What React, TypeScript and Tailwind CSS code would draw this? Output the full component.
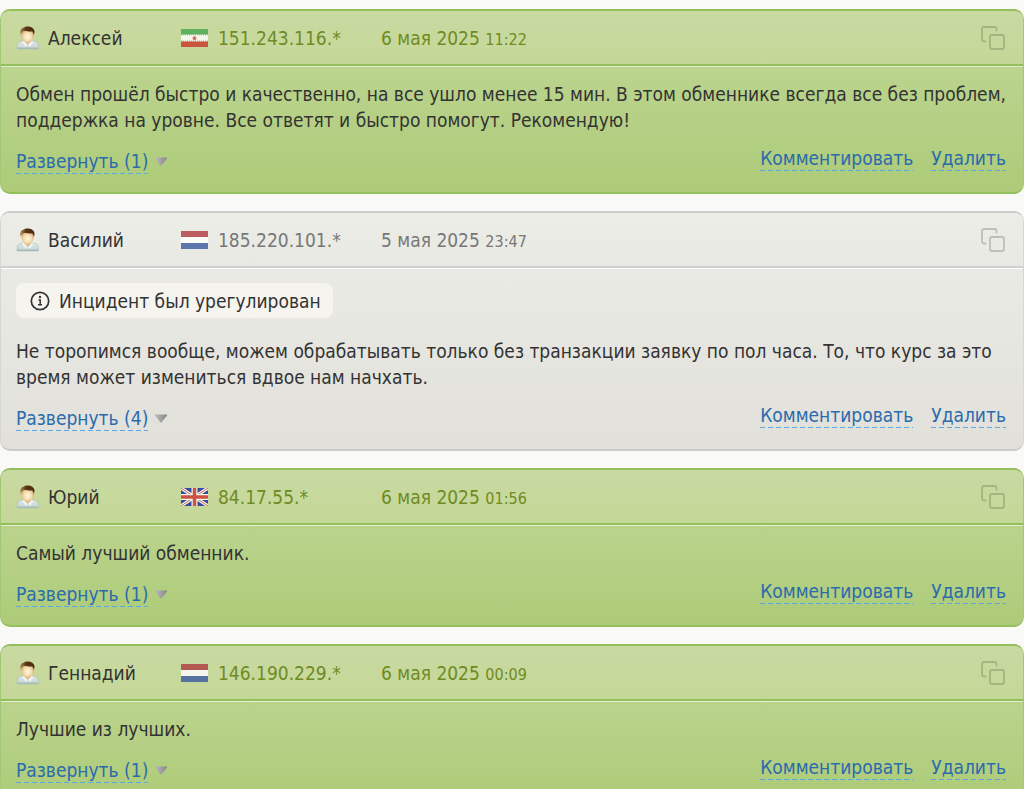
import { useId } from "react";
import { clsx } from "clsx";

type Country = "ir" | "nl" | "gb";

interface Review {
  id: number;
  name: string;
  country: Country;
  ip: string;
  date: string;
  time: string;
  text: string;
  replies: number;
  status?: string;
}

const reviews: Review[] = [
  {
    id: 1,
    name: "Алексей",
    country: "ir",
    ip: "151.243.116.*",
    date: "6 мая 2025",
    time: "11:22",
    text: "Обмен прошёл быстро и качественно, на все ушло менее 15 мин. В этом обменнике всегда все без проблем, поддержка на уровне. Все ответят и быстро помогут. Рекомендую!",
    replies: 1,
  },
  {
    id: 2,
    name: "Василий",
    country: "nl",
    ip: "185.220.101.*",
    date: "5 мая 2025",
    time: "23:47",
    text: "Не торопимся вообще, можем обрабатывать только без транзакции заявку по пол часа. То, что курс за это время может измениться вдвое нам начхать.",
    replies: 4,
    status: "Инцидент был урегулирован",
  },
  {
    id: 3,
    name: "Юрий",
    country: "gb",
    ip: "84.17.55.*",
    date: "6 мая 2025",
    time: "01:56",
    text: "Самый лучший обменник.",
    replies: 1,
  },
  {
    id: 4,
    name: "Геннадий",
    country: "nl",
    ip: "146.190.229.*",
    date: "6 мая 2025",
    time: "00:09",
    text: "Лучшие из лучших.",
    replies: 1,
  },
];

function Avatar() {
  const id = useId();
  return (
    <svg width="24" height="24" viewBox="0 0 24 24" className="shrink-0" aria-hidden="true">
      <defs>
        <radialGradient id={`${id}-face`} cx="0.5" cy="0.6" r="0.6">
          <stop offset="0" stopColor="#fff8e2" />
          <stop offset="0.6" stopColor="#f3d8a8" />
          <stop offset="1" stopColor="#c08a52" />
        </radialGradient>
        <linearGradient id={`${id}-hair`} x1="0" y1="0" x2="1" y2="0">
          <stop offset="0" stopColor="#b08a58" />
          <stop offset="0.4" stopColor="#5a3416" />
          <stop offset="1" stopColor="#4a2a10" />
        </linearGradient>
        <linearGradient id={`${id}-shirt`} x1="0" y1="0" x2="0" y2="1">
          <stop offset="0" stopColor="#dfe6e2" />
          <stop offset="0.7" stopColor="#ccd9d8" />
          <stop offset="1" stopColor="#98b2ac" />
        </linearGradient>
      </defs>
      <path
        d="M1 23v-3c0-3 2-4.500 5.500-5h10.500c3.500.5 5.500 2 5.500 5v3z"
        fill={`url(#${id}-shirt)`}
        stroke="#a9c0ba"
        strokeWidth="0.6"
      />
      <path d="M8 14.500l3.800 5 3.700-5z" fill="#dfb97f" />
      <path d="M7.500 14.800l4.300 4.200-2.300 2-3.500-5zM16 14.800l-4.200 4.200 2.200 2 3.500-5z" fill="#edf1f4" />
      <ellipse cx="11.600" cy="9.200" rx="6" ry="6.800" fill={`url(#${id}-face)`} />
      <path
        d="M4.800 9C3.500 5 4.500 2 8.500 1.200c1.500-1 7-.8 8.500 1.300 2 1.500 1.800 4.500.8 6.500-.3-1.800-.8-3-1.800-3.800-2.500.4-6 .3-8-.4C6.300 5.700 5.200 7 4.800 9z"
        fill={`url(#${id}-hair)`}
      />
    </svg>
  );
}

function Flag({ country }: { country: Country }) {
  return (
    <svg width="27" height="18" viewBox="0 0 27 18" className="shrink-0 opacity-80" aria-hidden="true">
      {country === "ir" && (
        <>
          <path d="M0 0h27v18H0z" fill="#fff" />
          <path d="M0 0h27v5.500H0z" fill="#46a850" />
          <path d="M0 12.500h27V18H0z" fill="#cc3527" />
          <path d="M0 5.800h27" stroke="#46a850" strokeWidth="0.8" strokeDasharray="1 1" />
          <path d="M0 12.200h27" stroke="#cc3527" strokeWidth="0.8" strokeDasharray="1 1" />
          <path d="M13.500 7l1.800 1.200v2l-1.800 1.200-1.800-1.200v-2z" fill="#d8554b" />
        </>
      )}
      {country === "nl" && (
        <>
          <path d="M0 0h27v18H0z" fill="#fff" />
          <path d="M0 0h27v6H0z" fill="#b03a40" />
          <path d="M0 12h27v6H0z" fill="#3a58a0" />
        </>
      )}
      {country === "gb" && (
        <>
          <path d="M0 0h27v18H0z" fill="#15299a" />
          <path d="M0 0l27 18M27 0L0 18" stroke="#fff" strokeWidth="3.200" />
          <path d="M0 0l27 18M27 0L0 18" stroke="#cf4340" strokeWidth="1" />
          <path d="M13.500 0v18M0 9h27" stroke="#fff" strokeWidth="6" />
          <path d="M13.500 0v18M0 9h27" stroke="#cf3030" strokeWidth="3.500" />
        </>
      )}
    </svg>
  );
}

function CopyIcon() {
  return (
    <svg
      width="26"
      height="26"
      viewBox="0 0 26 26"
      fill="none"
      stroke="currentColor"
      strokeWidth="1.800"
      strokeLinecap="round"
      strokeLinejoin="round"
      aria-hidden="true"
    >
      <rect x="10" y="10" width="14" height="14" rx="2" />
      <path d="M5.500 16.500H4A2 2 0 0 1 2 14.500V4A2 2 0 0 1 4 2H14.500A2 2 0 0 1 16.500 4V5.500" />
    </svg>
  );
}

function InfoIcon() {
  return (
    <svg width="20" height="20" viewBox="0 0 20 20" className="shrink-0" fill="none" stroke="currentColor" aria-hidden="true">
      <circle cx="10" cy="10" r="8.700" strokeWidth="1.700" />
      <path d="M8.500 9h1.700v4.500M8 13.800h4" strokeWidth="1.500" />
      <circle cx="10" cy="6" r="1.200" fill="currentColor" stroke="none" />
    </svg>
  );
}

function Arrow() {
  const id = useId();
  return (
    <svg width="12" height="9" viewBox="0 0 12 9" aria-hidden="true">
      <defs>
        <linearGradient id={id} x1="0" y1="0" x2="1" y2="0">
          <stop offset="0" stopColor="#bcbcbc" />
          <stop offset="1" stopColor="#868686" />
        </linearGradient>
      </defs>
      <path d="M0 .5h12v1L6.500 8.500h-1L0 1.500z" fill={`url(#${id})`} />
    </svg>
  );
}

// Dashed underline drawn as a repeating 5px dash / 3px gap
const linkStyle =
  "cursor-pointer pb-px leading-6 text-[#2a6bac] bg-[linear-gradient(90deg,#5aa9e6_5px,transparent_5px)] bg-[length:8px_1px] bg-bottom-left bg-repeat-x hover:text-[#c0392b]";

function ReviewCard({ review }: { review: Review }) {
  const settled = Boolean(review.status);

  return (
    <article
      className={clsx(
        "overflow-hidden rounded-[10px] border-x border-y-2",
        settled
          ? "border-x-[#d6d6d3] border-y-[#cbcbca] bg-linear-to-b from-[#ededE8] to-[#e1e0da]"
          : "border-x-[#a3c873] border-y-[#93c05c] bg-linear-to-b from-[#c2d898] to-[#adcb78]"
      )}
    >
      <header
        className={clsx(
          "flex h-[55px] items-center border-b-2 pr-[17px] pl-[15px]",
          settled
            ? "border-[#d0d0ce] bg-linear-to-b from-[#edede8] to-[#e9e9e3] text-[#777]"
            : "border-[#93c05c] bg-linear-to-b from-[#c9daa2] to-[#c5d797] text-[#6f8b22]"
        )}
      >
        <div className="flex w-[165px] items-center gap-2">
          <Avatar />
          <span className="text-[#333]">{review.name}</span>
        </div>
        <div className="flex w-[200px] items-center gap-[10px]">
          <Flag country={review.country} />
          <span>{review.ip}</span>
        </div>
        <time>
          {review.date} <span className="text-[16px] leading-4">{review.time}</span>
        </time>
        <button
          type="button"
          aria-label="Копировать"
          className={clsx("ml-auto cursor-pointer", settled ? "text-[#bfbfba]" : "text-[#a4b57f]")}
        >
          <CopyIcon />
        </button>
      </header>

      <div
        className={clsx(
          "border-t pt-[14px] pr-[15px] pb-[18px] pl-[15px]",
          settled ? "border-white" : "border-[#e3edcc]"
        )}
      >
        {review.status && (
          <div className="mb-[20px] inline-flex h-[35px] items-center gap-[9px] rounded-lg bg-[#f5f4ee] pr-3 pl-[14px]">
            <InfoIcon />
            <span>{review.status}</span>
          </div>
        )}
        <p>{review.text}</p>
        <div className="mt-[13px] flex items-start justify-between pr-[2px]">
          <div className="mt-[3px] flex items-center gap-[7px]">
            <button type="button" className={linkStyle}>
              Развернуть ({review.replies})
            </button>
            <Arrow />
          </div>
          <div className="flex gap-[18px]">
            <button type="button" className={linkStyle}>
              Комментировать
            </button>
            <button type="button" className={linkStyle}>
              Удалить
            </button>
          </div>
        </div>
      </div>
    </article>
  );
}

export default function App() {
  return (
    <main className="flex min-h-screen flex-col gap-[17px] bg-[#f9f9f7] pt-[9px] font-['DejaVu_Sans_Condensed','DejaVu_Sans',sans-serif] text-[19px] leading-[26px] text-[#333]">
      {reviews.map((review) => (
        <ReviewCard key={review.id} review={review} />
      ))}
    </main>
  );
}
